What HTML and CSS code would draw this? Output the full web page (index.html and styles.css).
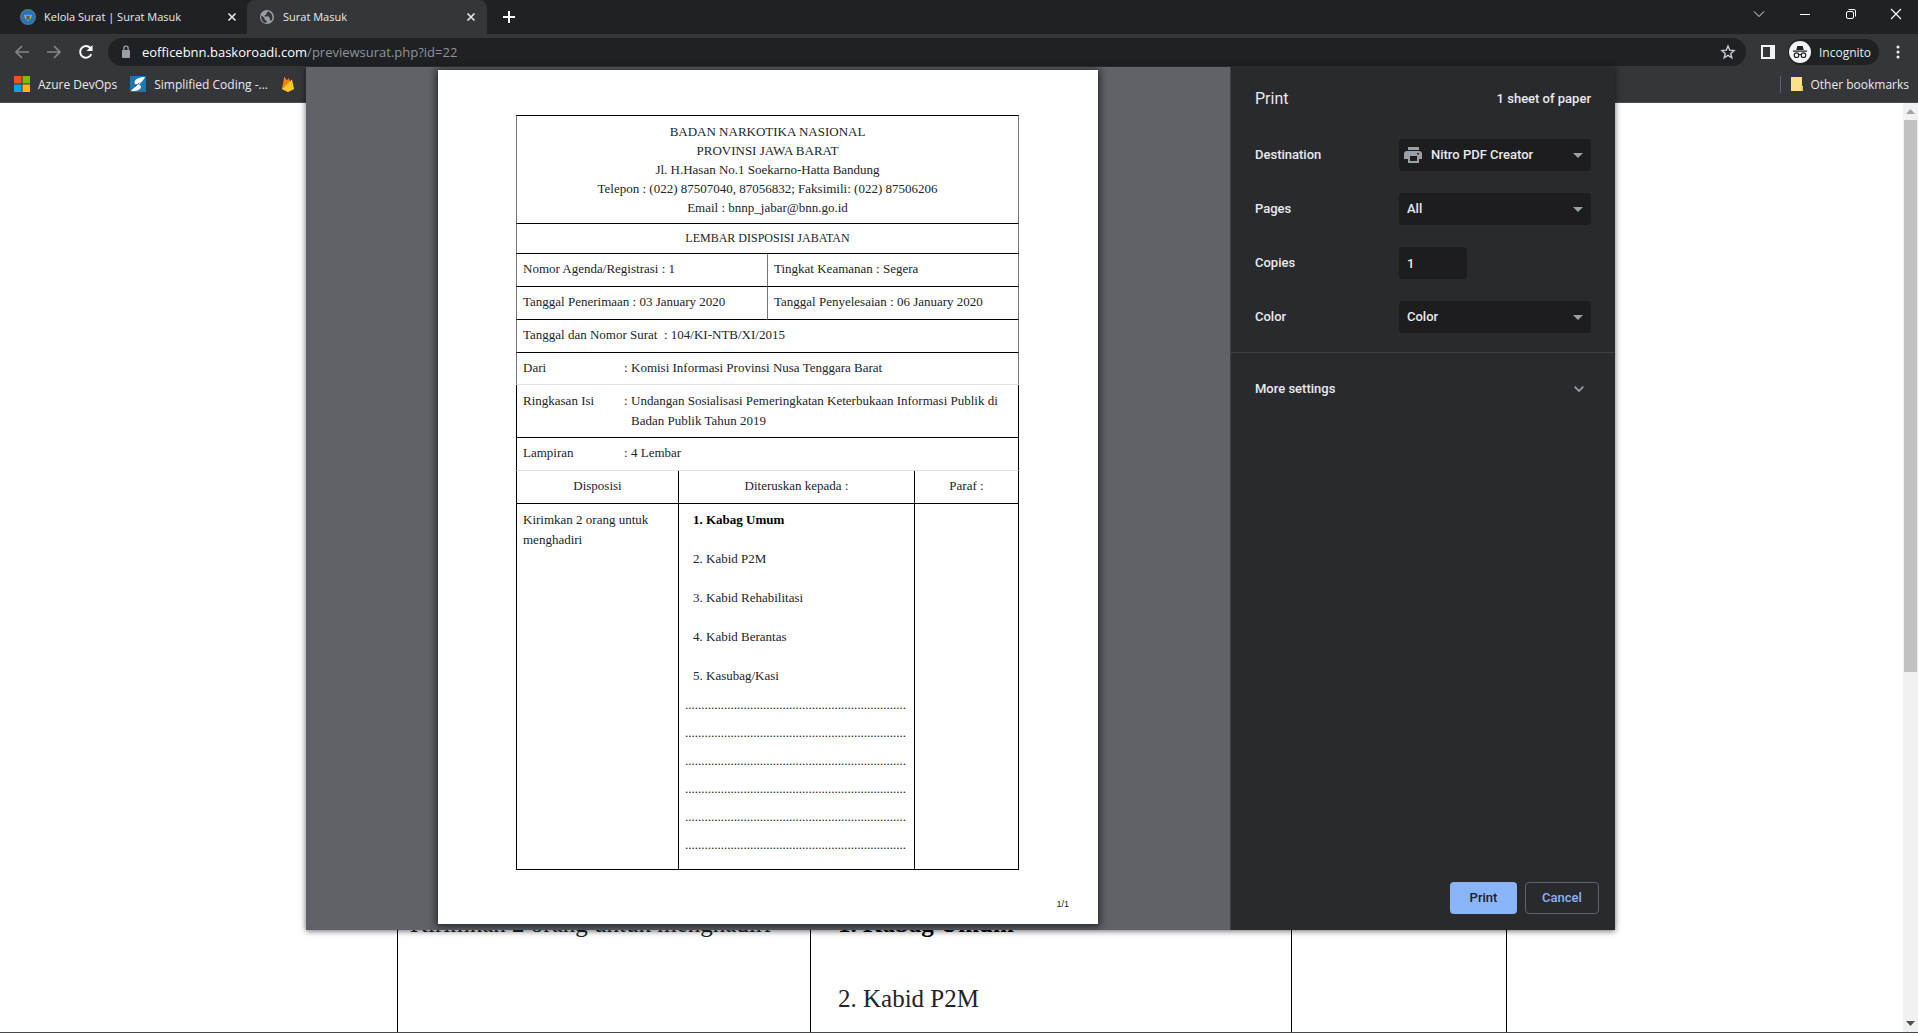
FILE: index.html
```html
<!DOCTYPE html>
<html lang="id">
<head>
<meta charset="utf-8">
<title>Surat Masuk</title>
<link rel="stylesheet" href="styles.css">
</head>
<body>
<header class="chrome">
  <div class="tabstrip">
    <div class="tab">
      <svg class="favicon" viewBox="0 0 16 16"><circle cx="8" cy="8" r="8" fill="#5d7180"/><circle cx="8" cy="8" r="6.6" fill="#1878c8"/><path d="M4 5.500l3 1 1-1.500 1 1.500 3-1-1 4-2 1-1 2.500-1-2.500-2-1z" fill="#b9a55a"/><path d="M6.500 7h3v2.500L8 11 6.500 9.500z" fill="#4f5c4c"/></svg>
      <span class="tab-title">Kelola Surat | Surat Masuk</span>
      <button class="icon-button" aria-label="Close tab"><svg width="10" height="10" viewBox="0 0 10 10"><path d="M1.500 1.500l7 7m0-7l-7 7" stroke="#e8eaed" stroke-width="1.600"/></svg></button>
    </div>
    <div class="tab tab-active">
      <svg class="favicon" viewBox="0 0 16 16"><circle cx="8" cy="8" r="7" fill="#9aa0a6"/><path d="M2.300 6.500l3.200 2.300v1.700l2 1.200v2.300C4.500 14 1.500 11 2.300 6.500zM9 2.300L7.200 4.600v1.500H5.600v1.500h4.200l1.100 1.800v2l1.700.1c1.800-3 .9-7.300-3.600-9.200z" fill="#35363a"/></svg>
      <span class="tab-title">Surat Masuk</span>
      <button class="icon-button" aria-label="Close tab"><svg width="10" height="10" viewBox="0 0 10 10"><path d="M1.500 1.500l7 7m0-7l-7 7" stroke="#e8eaed" stroke-width="1.600"/></svg></button>
    </div>
    <button class="icon-button new-tab" aria-label="New tab"><svg width="12" height="12" viewBox="0 0 12 12"><path d="M6 0v12M0 6h12" stroke="#fff" stroke-width="2"/></svg></button>
    <div class="window-controls">
      <button aria-label="Search tabs"><svg width="12" height="12" viewBox="0 0 12 12"><path d="M1 3.500l5 5 5-5" fill="none" stroke="#e8eaed"/></svg></button>
      <button aria-label="Minimize"><svg width="12" height="12" viewBox="0 0 12 12"><path d="M1 6.500h10" stroke="#fff"/></svg></button>
      <button aria-label="Restore"><svg width="12" height="12" viewBox="0 0 12 12"><rect x="1.500" y="3.500" width="7" height="7" rx="1.500" fill="none" stroke="#fff"/><path d="M3.500 1.500H9a1.500 1.500 0 0 1 1.500 1.500v5.500" fill="none" stroke="#fff"/></svg></button>
      <button aria-label="Close"><svg width="12" height="12" viewBox="0 0 12 12"><path d="M1 1l10 10M11 1L1 11" stroke="#fff" stroke-width="1.200"/></svg></button>
    </div>
  </div>
  <div class="toolbar">
    <button class="nav-button" aria-label="Back"><svg width="16" height="16" viewBox="0 0 16 16"><path d="M15 8H2M8 2L2 8l6 6" fill="none" stroke="#85878a" stroke-width="1.700"/></svg></button>
    <button class="nav-button" aria-label="Forward"><svg width="16" height="16" viewBox="0 0 16 16"><path d="M1 8h13M8 2l6 6-6 6" fill="none" stroke="#85878a" stroke-width="1.700"/></svg></button>
    <button class="nav-button" aria-label="Reload"><svg width="16" height="16" viewBox="0 0 16 16"><path d="M13.300 10.200A5.800 5.800 0 1 1 12.300 4" fill="none" stroke="#fff" stroke-width="2"/><path d="M14.500 1v6h-6z" fill="#fff"/></svg></button>
    <div class="omnibox">
      <svg width="10" height="14" viewBox="0 0 10 14"><rect x="1" y="5" width="8" height="8" rx="1" fill="#9aa0a6"/><path d="M2.800 5V3.400a2.200 2.200 0 0 1 4.400 0V5" fill="none" stroke="#9aa0a6" stroke-width="1.300"/></svg>
      <div class="address" role="textbox" aria-label="Address">eofficebnn.baskoroadi.com<span>/previewsurat.php?id=22</span></div>
      <button class="icon-button" aria-label="Bookmark this tab"><svg width="16" height="16" viewBox="0 0 16 16"><path d="M8 2l1.700 4.100 4.400.4-3.300 2.900 1 4.300L8 11.400l-3.800 2.300 1-4.300-3.300-2.900 4.400-.4z" fill="none" stroke="#c8cbcf" stroke-width="1.400"/></svg></button>
    </div>
    <button class="icon-button" aria-label="Side panel"><svg width="14" height="14" viewBox="0 0 14 14"><path fill-rule="evenodd" d="M0 0h14v14H0zM2 2v10h7V2z" fill="#f1f3f4"/></svg></button>
    <button class="incognito"><svg width="22" height="22" viewBox="0 0 22 22"><circle cx="11" cy="11" r="11" fill="#f1f3f4"/><path d="M8.300 5h5.400l1 4H7.300zM4 9.600h14v1.200H4z" fill="#202124"/><g fill="none" stroke="#202124" stroke-width="1.100"><circle cx="7.500" cy="14.200" r="2.300"/><circle cx="14.500" cy="14.200" r="2.300"/><path d="M9.800 13.800q1.200-.6 2.400 0"/></g></svg>Incognito</button>
    <button class="icon-button menu" aria-label="Menu"><svg width="4" height="14" viewBox="0 0 4 14"><g fill="#f1f3f4"><circle cx="2" cy="2" r="1.500"/><circle cx="2" cy="7" r="1.500"/><circle cx="2" cy="12" r="1.500"/></g></svg></button>
  </div>
  <nav class="bookmarks">
    <a href="#"><svg width="16" height="16" viewBox="0 0 16 16"><path d="M0 0h7.500v7.500H0z" fill="#f25022"/><path d="M8.500 0H16v7.500H8.500z" fill="#7fba00"/><path d="M0 8.500h7.500V16H0z" fill="#00a4ef"/><path d="M8.500 8.500H16V16H8.500z" fill="#ffb900"/></svg>Azure DevOps</a>
    <a href="#"><svg width="16" height="16" viewBox="0 0 16 16"><path d="M0 0h16v16H0z" fill="#1b76b5"/><path d="M15 1C9 1 4 3.500 4.500 7c.3 1.800 3 1.500 4.500 1.800C11 6.500 13.500 4 15 1z" fill="#fff"/><path d="M1 15c5 .5 9.500-1 10-4 .3-2-1.500-2-3.500-2C5.500 11 3 12.500 1 15z" fill="#fff"/><path d="M9.500 6.500L5 10.500" stroke="#1b76b5"/></svg>Simplified Coding -...</a>
    <a href="#" aria-label="Firebase"><svg width="14" height="16" viewBox="0 0 14 16"><path d="M1 13L3.300.5l2.600 4L7.500 2l5.500 11-6 3z" fill="#f6820c"/><path d="M1 13L11 3.500 13 13l-6 3z" fill="#ffca28"/></svg></a>
    <a href="#" class="other"><svg width="12" height="14" viewBox="0 0 12 14"><path d="M0 0h11v9h1v5H0z" fill="#ffe08a"/><path d="M10 10h2v4h-2z" fill="#f3c84c"/></svg>Other bookmarks</a>
  </nav>
</header>

<main class="viewport">
  <div class="letter-scroll">
    <table class="letter">
      <colgroup><col class="w37"><col class="w43"><col></colgroup>
      <tr>
        <td>Kirimkan 2 orang untuk menghadiri</td>
        <td class="indent"><p><b>1. Kabag Umum</b></p><p>2. Kabid P2M</p></td>
        <td></td>
      </tr>
    </table>
  </div>
  <div class="scrollbar">
    <svg width="9" height="5" viewBox="0 0 9 5"><path d="M4.500 0L9 5H0z" fill="#a3a3a3"/></svg>
    <div class="thumb"></div>
    <svg width="9" height="5" viewBox="0 0 9 5"><path d="M0 0h9L4.500 5z" fill="#505050"/></svg>
  </div>
</main>

<section class="print-dialog" role="dialog" aria-label="Print">
  <div class="preview">
    <article class="sheet">
      <table class="form">
        <colgroup><col class="c1"><col class="c2"><col class="c3"><col class="c4"></colgroup>
        <tr class="soft head"><td colspan="4">BADAN NARKOTIKA NASIONAL<br>PROVINSI JAWA BARAT<br>Jl. H.Hasan No.1 Soekarno-Hatta Bandung<br>Telepon : (022) 87507040, 87056832; Faksimili: (022) 87506206<br>Email : bnnp_jabar@bnn.go.id</td></tr>
        <tr class="soft title"><td colspan="4">LEMBAR DISPOSISI JABATAN</td></tr>
        <tr class="soft"><td colspan="2">Nomor Agenda/Registrasi : 1</td><td colspan="2">Tingkat Keamanan : Segera</td></tr>
        <tr class="soft"><td colspan="2">Tanggal Penerimaan : 03 January 2020</td><td colspan="2">Tanggal Penyelesaian : 06 January 2020</td></tr>
        <tr class="soft"><td colspan="4">Tanggal dan Nomor Surat &nbsp;: 104/KI-NTB/XI/2015</td></tr>
        <tr class="soft faint from"><td colspan="4"><div class="field"><span>Dari</span><span>:</span><span>Komisi Informasi Provinsi Nusa Tenggara Barat</span></div></td></tr>
        <tr class="summary"><td colspan="4"><div class="field"><span>Ringkasan Isi</span><span>:</span><span>Undangan Sosialisasi Pemeringkatan Keterbukaan Informasi Publik di Badan Publik Tahun 2019</span></div></td></tr>
        <tr class="faint"><td colspan="4"><div class="field"><span>Lampiran</span><span>:</span><span>4 Lembar</span></div></td></tr>
        <tr class="center"><td>Disposisi</td><td colspan="2">Diteruskan kepada :</td><td>Paraf :</td></tr>
        <tr class="body">
          <td>Kirimkan 2 orang untuk menghadiri</td>
          <td colspan="2">
            <div class="recipients"><b>1. Kabag Umum</b><span>2. Kabid P2M</span><span>3. Kabid Rehabilitasi</span><span>4. Kabid Berantas</span><span>5. Kasubag/Kasi</span></div>
            <div class="dots"><span>....................................................................</span><span>....................................................................</span><span>....................................................................</span><span>....................................................................</span><span>....................................................................</span><span>....................................................................</span></div>
          </td>
          <td></td>
        </tr>
      </table>
      <footer class="page-number">1/1</footer>
    </article>
  </div>
  <form class="settings">
    <div class="settings-head"><h1>Print</h1><span>1 sheet of paper</span></div>
    <div class="options">
      <div class="option"><label for="dest">Destination</label><div class="select with-icon"><svg class="printer" width="18" height="16" viewBox="0 0 18 16"><path d="M4 0h11v3H4zM3 4h12a3 3 0 0 1 3 3v5h-3v4H4v-4H0V7a3 3 0 0 1 3-3zm3 5v5h7V9zm8-3.200a1 1 0 1 0 0 2 1 1 0 0 0 0-2z" fill="#9aa0a6" fill-rule="evenodd"/></svg><select id="dest"><option>Nitro PDF Creator</option></select></div></div>
      <div class="option"><label for="pages">Pages</label><div class="select"><select id="pages"><option>All</option></select></div></div>
      <div class="option"><label for="copies">Copies</label><input id="copies" value="1"></div>
      <div class="option"><label for="color">Color</label><div class="select"><select id="color"><option>Color</option></select></div></div>
    </div>
    <button type="button" class="more">More settings<svg width="10" height="6" viewBox="0 0 10 6"><path d="M.7.7L5 5 9.300.7" fill="none" stroke="#9aa0a6" stroke-width="1.700"/></svg></button>
    <div class="actions"><button type="button" class="primary">Print</button><button type="button" class="secondary">Cancel</button></div>
  </form>
</section>
</body>
</html>
```
FILE: styles.css
```css
* { box-sizing: border-box; }

body {
  margin: 0;
  height: 100vh;
  display: flex;
  flex-direction: column;
  position: relative;
  overflow: hidden;
  background: #fff;
  border-bottom: 1px solid #45454d;
  font-family: "Open Sans", "Noto Sans", sans-serif;
  font-size: 12px;
}

svg { display: block; flex: none; }
button { font: inherit; color: inherit; background: none; border: 0; padding: 0; }

/* Browser frame */
.chrome { background: #35363a; color: #e8eaed; border-bottom: 1px solid #4b4c50; }
.tabstrip { display: flex; height: 34px; background: #202124; }
.tab { display: flex; align-items: center; width: 240px; padding: 0 11px 0 12px; gap: 8px; }
.tab:first-child { width: 247px; padding: 0 10px 0 20px; }
.tab-active { background: #35363a; border-radius: 8px 8px 0 0; }
.favicon { width: 16px; height: 16px; }
.tab-title { flex: 1; white-space: nowrap; font-size: 11px; padding-bottom: 1px; }
.icon-button { display: flex; align-items: center; justify-content: center; }
.new-tab { width: 44px; }
.window-controls { display: flex; margin-left: auto; }
.window-controls button { width: 46px; height: 28px; display: flex; align-items: center; justify-content: center; }
.window-controls button:last-child { width: 44px; }

.toolbar { display: flex; align-items: center; height: 36px; padding: 0 18px 0 6px; }
.nav-button { width: 32px; display: flex; justify-content: center; }
.omnibox {
  flex: 1; display: flex; align-items: center; height: 28px;
  margin: 0 15px 0 6px; padding: 0 10px 0 13px; gap: 11px;
  background: #202124; border-radius: 14px; font-size: 13px;
}
.address { flex: 1; color: #fff; }
.address span { color: #8f9398; }
.incognito {
  display: flex; align-items: center; gap: 8px; height: 26px; width: 91px;
  margin-left: 13px; padding: 0 0 0 1px; background: #202124; border-radius: 13px;
}
.menu { margin-left: 17px; }

.bookmarks { display: flex; align-items: center; height: 32px; padding: 0 9px 4px 14px; gap: 13px; }
.bookmarks a { display: flex; align-items: center; gap: 8px; color: #e8eaed; text-decoration: none; white-space: nowrap; }
.bookmarks .other { margin-left: auto; gap: 7px; padding-left: 10px; border-left: 1px solid #5f6368; }

/* Page behind the dialog */
.viewport { flex: 1; display: flex; min-height: 0; }
.letter-scroll { flex: 1; padding: 789px 396px 0 397px; overflow: hidden; }
.letter {
  width: 100%; height: 200px; border-collapse: collapse; table-layout: fixed;
  font: 25px/37px "Liberation Serif", serif; color: #212529;
}
.letter td { border: 1px solid #000; padding: 12px; vertical-align: top; }
.letter .indent { padding-left: 27px; }
.letter p { margin: 0 0 38px; }
.letter b { color: #000; }
.w37 { width: 413px; }
.w43 { width: 481px; }
.scrollbar { width: 15px; display: flex; flex-direction: column; align-items: center; padding: 6px 0; background: #f1f1f1; }
.thumb { width: 13px; height: 552px; margin: 6px 0 auto; background: #c1c1c1; }

/* Print dialog */
.print-dialog {
  position: absolute; top: 67px; left: 306px; right: 303px; bottom: 102px;
  display: flex; color: #e8eaed; background: #292a2d;
  box-shadow: 0 1px 6px rgba(0, 0, 0, .6);
}
.preview { flex: 1; display: flex; justify-content: center; align-items: flex-start; padding-top: 3px; background: #5f6368; overflow: hidden; }
.sheet {
  width: 660px; height: 854px; padding: 45px 79px 0 78px;
  display: flex; flex-direction: column;
  background: #fff; box-shadow: 0 1px 8px 2px rgba(0, 0, 0, .6);
  font: 13px/20px "Liberation Serif", serif; color: #212529;
}
.form { width: 100%; border-spacing: 0; table-layout: fixed; }
.c1 { width: 162px; }
.c2 { width: 89px; }
.c3 { width: 147px; }
.form tr { height: 33px; }
.form td { padding: 5px 0 7px 6px; vertical-align: top; border-bottom: 1px solid #000; border-left: 1px solid #000; }
.form td:last-child { border-right: 1px solid #000; }
.form .soft td { border-left-color: #777; }
.form .soft td:last-child { border-right-color: #777; }
.form .faint td { border-bottom-color: #dee2e6; }
.form .head { height: 109px; line-height: 19px; }
.form .head td { border-top: 1px solid #000; padding: 6px; text-align: center; }
.form .title { height: 30px; font-size: 12px; }
.form .title td { padding: 4px; text-align: center; }
.form .from { height: 32px; }
.form .from td { padding-bottom: 6px; }
.form .summary td { padding: 6px 0 6px 6px; }
.form .center td { padding: 5px 6px 7px; text-align: center; }
.form .body { height: 366px; }
.form .body td { padding: 6px 0 0 6px; }
.field { display: flex; }
.field span:nth-child(1) { width: 101px; }
.field span:nth-child(2) { width: 7px; }
.field span:nth-child(3) { flex: 1; }
.recipients { display: flex; flex-direction: column; gap: 19px; padding-left: 8px; }
.recipients b { color: #000; }
.dots { display: flex; flex-direction: column; gap: 8px; margin-top: 9px; }
.page-number { margin: auto -50px 15px auto; font: 9px/10px "Liberation Sans", sans-serif; }

.settings {
  width: 385px; display: flex; flex-direction: column;
  border-left: 1px solid #3c4043; font: 500 13px/20px Roboto, sans-serif;
}
.settings-head { display: flex; justify-content: space-between; align-items: center; height: 64px; padding: 0 24px; }
.settings h1 { margin: 0; font-size: 16px; font-weight: 400; }
.options { display: flex; flex-direction: column; gap: 22px; padding: 8px 24px 12px; height: 222px; border-bottom: 1px solid #3c4043; }
.option { display: flex; align-items: center; }
.option label { flex: 1; }
.select { position: relative; width: 192px; }
.select::after {
  content: ""; position: absolute; right: 8px; top: 14px;
  border: 5px solid transparent; border-top-color: #9aa0a6; border-bottom: 0;
}
.printer { position: absolute; left: 5px; top: 8px; }
select, input {
  appearance: none; display: block; height: 32px; padding: 0 8px; border: 0; border-radius: 4px;
  background: #1d1d1f; color: #e8eaed; font: 500 13px/20px Roboto, sans-serif;
}
select { width: 100%; }
.with-icon select { padding-left: 32px; }
.option input { width: 68px; margin-right: 124px; }
.more { display: flex; justify-content: space-between; align-items: center; padding: 26px 31px 0 24px; }
.actions { display: flex; justify-content: flex-end; gap: 8px; margin-top: auto; padding: 16px; }
.actions button { height: 32px; border-radius: 4px; }
.primary { width: 67px; background: #8ab4f8; color: #202124; }
.secondary { width: 74px; border: 1px solid #5f6368; color: #8ab4f8; }
```
